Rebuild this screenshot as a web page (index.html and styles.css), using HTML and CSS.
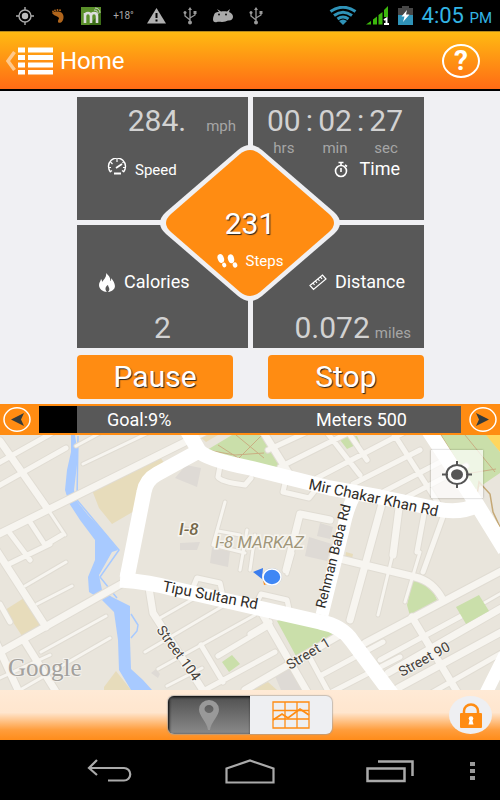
FILE: index.html
```html
<!DOCTYPE html>
<html lang="en">
<head>
    <meta charset="UTF-8">
    <meta name="viewport" content="width=device-width, initial-scale=1">
    <title>Home</title>
    <link rel="stylesheet" href="styles.css">
</head>
<body>
    <div class="status-bar">
        <div class="status-icons">
            <svg width="18" height="18" viewBox="0 0 18 18"><g fill="none" stroke="#aaa" stroke-width="1.4"><circle cx="9" cy="9" r="6"/><path d="M9 0v3M9 15v3M0 9h3M15 9h3"/></g><circle cx="9" cy="9" r="3.2" fill="#bbb"/></svg>
            <svg width="12" height="14" viewBox="0 0 12 14" fill="#b0651c"><path d="M0 4C2 2 8 2 10 4c3 3 1 9-1 9.500-3 1-4-1-2-4C7 7 3 8 0 4z"/><circle cx="1" cy="2.500" r=".9"/><circle cx="3" cy="1.500" r=".9"/><circle cx="5.500" cy="1" r=".9"/><circle cx="8" cy="1.300" r="1"/></svg>
            <svg width="20" height="18" viewBox="0 0 20 18"><rect width="20" height="18" fill="#5a8f2a"/><path d="M20 5v13H8z" fill="#3c6d17"/><path d="M4 16V6M4 9c0-4 6-4 6 0v7M10 9c0-4 6-4 6 0v7" fill="none" stroke="#ddd" stroke-width="2.600"/><path d="M13 3c3 0 4 2 4 4M14 1c3 0 5 2 5 5" fill="none" stroke="#ccc"/></svg>
            <span class="temperature">+18°</span>
            <svg width="19" height="16" viewBox="0 0 19 16"><path d="M9.500 0L19 15.500H0z" fill="#b0b0b0"/><path d="M9.500 5v5M9.500 11.500v2" stroke="#000" stroke-width="2"/></svg>
            <svg width="14" height="18" viewBox="0 0 14 18" fill="none" stroke="#999" stroke-width="1.300"><path d="M7 2v13M2 6v3l5 4M12 6v2l-5 3"/><g fill="#999" stroke="none"><path d="M7 0l2 3H5z"/><circle cx="7" cy="15.500" r="2"/><circle cx="2" cy="5.500" r="1.500"/><path d="M10.500 4h3v3h-3z"/></g></svg>
            <svg width="20" height="14" viewBox="0 0 20 14"><path d="M1 6C2 3 4 3 6 3L4 0l4 2.500c2-.5 4-.5 6 0L17 0l-1 3c3 1 4 3 4 5s-2 4-5 3.500c-2 .5-3 1.500-6 1.500-2 0-3-.5-5 0-4 1-5-2-3-7z" fill="#aaa"/><circle cx="6" cy="5.500" r="1" fill="#111"/><circle cx="13" cy="5.500" r="1" fill="#111"/></svg>
            <svg width="14" height="18" viewBox="0 0 14 18" fill="none" stroke="#999" stroke-width="1.300"><path d="M7 2v13M2 6v3l5 4M12 6v2l-5 3"/><g fill="#999" stroke="none"><path d="M7 0l2 3H5z"/><circle cx="7" cy="15.500" r="2"/><circle cx="2" cy="5.500" r="1.500"/><path d="M10.500 4h3v3h-3z"/></g></svg>
        </div>
        <div class="status-system">
            <svg width="28" height="19" viewBox="0 0 28 19" fill="none" stroke="#2f93b8" stroke-width="3"><path d="M1.500 5.500Q14-3 26.500 5.500M5 9.500Q14 3 23 9.500M8.500 13Q14 9 19.500 13"/><path d="M14 19l-4-4q4-3 8 0z" fill="#2f93b8" stroke="none"/></svg>
            <svg width="23" height="19" viewBox="0 0 23 19"><path d="M0 18.500L5 15v3.500zM7 13.500l4-3v8H7zM12.500 9l4-3v12.500h-4zM18 4l4-4v11h-4z" fill="#3cb70d"/><path d="M18 14l2.500-1.500V18M18 18h5" fill="none" stroke="#fff" stroke-width="2"/></svg>
            <svg width="15" height="19" viewBox="0 0 15 19"><path d="M4 0h7v2h4v7H0V2h4z" fill="#474747"/><path d="M0 9h15v10H0z" fill="#2f93b8"/><path d="M9 4L3.500 10.500h3L5 16l6.500-7.500H8z" fill="#fff"/></svg>
            <span class="clock-time">4:05 <small>PM</small></span>
        </div>
    </div>

    <header class="header">
        <button class="menu-button" aria-label="Menu">
            <svg width="48" height="28" viewBox="0 0 48 28"><path d="M8.500 5L2 14l6.500 9" fill="none" stroke="#ffc98c" stroke-width="3.500"/><path d="M12 .500h7v5h-7zM22 .500h25v5H22zM12 8h7v5h-7zM22 8h25v5H22zM12 15.500h7v5h-7zM22 15.500h25v5H22zM12 23h7v4.500h-7zM22 23h25v4.500H22z" fill="#fff"/></svg>
        </button>
        <h1>Home</h1>
        <button class="help-button" aria-label="Help">?</button>
    </header>

    <main>
        <section class="dashboard">
            <div class="cells">
                <div class="cell speed">
                    <div class="value">284.<span class="unit">mph</span></div>
                    <div class="label small">
                        <svg width="20" height="17" viewBox="0 0 20 17" fill="none" stroke="#fff"><path d="M3.500 14a8.500 8.500 0 1 1 13 0" stroke-width="1.400"/><path d="M1 9.500h3M16 9.500h3M3.500 4l2 2M10 1v3M16.500 4l-1 1M3 14l2-1.500M17 14l-2-1.500" stroke-width="1.200"/><path d="M9 10l6-4" stroke-width="1.800"/><path d="M7 15.500h7" stroke-width="2"/></svg>
                        Speed
                    </div>
                </div>
                <div class="cell time">
                    <div class="timer">
                        <div class="value">00</div><div class="value">:</div>
                        <div class="value">02</div><div class="value">:</div>
                        <div class="value">27</div>
                        <span>hrs</span><span></span><span>min</span><span></span><span>sec</span>
                    </div>
                    <div class="label">
                        <svg width="14" height="17" viewBox="0 0 14 17" fill="none" stroke="#fff" stroke-width="1.600"><circle cx="7" cy="10" r="5.500"/><path d="M4.500 1.500h5M7 1v4M7 7v4M11 4l2 1.500"/></svg>
                        Time
                    </div>
                </div>
                <div class="cell calories">
                    <div class="label">
                        <svg width="17" height="19" viewBox="0 0 17 19"><path d="M7 0c3 3 5 5 4 8 1 0 1.500-2 1-3 3 3 6 9 2 12-2 1.500-4 2-5 2 3-3 0-5 0-7-2 1-4 4-1 7-4 0-8-3-8-7 0-3 2-4 2-6 1 1 1 2 1 3 2-3 5-5 4-9z" fill="#fff"/></svg>
                        Calories
                    </div>
                    <div class="value">2</div>
                </div>
                <div class="cell distance">
                    <div class="label">
                        <svg width="18" height="17" viewBox="0 0 18 17" fill="none" stroke="#fff" stroke-width="1.200"><path d="M1 11.500L13.500 1 17 5 4.500 15.500zM4 9l1.500 2M6.500 7L8 9M9 5l1.500 2M11.500 3L13 5"/></svg>
                        Distance
                    </div>
                    <div class="value">0.072<span class="unit">miles</span></div>
                </div>
            </div>
            <div class="steps">
                <svg class="diamond" viewBox="0 0 182 158"><path d="M79 6Q91-4 103 6L175 68Q187 79 175 90L103 152Q91 162 79 152L7 90Q-5 79 7 68Z" fill="#f0f0f3"/><path d="M81 10Q91 2 101 10L170 70Q180 79 170 88L101 148Q91 156 81 148L12 88Q2 79 12 70Z" fill="#ff8c12"/></svg>
                <div class="value">231</div>
                <div class="label small">
                    <svg width="21" height="14" viewBox="0 0 21 14" fill="#fff"><ellipse cx="3.800" cy="4.500" rx="3.100" ry="4.500" transform="rotate(-20 3.800 4.500)"/><ellipse cx="7.200" cy="11" rx="2" ry="2.500" transform="rotate(-20 7.200 11)"/><ellipse cx="14" cy="4.800" rx="3.100" ry="4.500" transform="rotate(-15 14 4.800)"/><ellipse cx="18" cy="11" rx="2.300" ry="2.600" transform="rotate(-20 18 11)"/></svg>
                    Steps
                </div>
            </div>
            <div class="actions">
                <button>Pause</button>
                <button>Stop</button>
            </div>
        </section>

        <section class="goal-bar">
            <button class="round-button" aria-label="Previous goal">
                <svg width="28" height="25" viewBox="0 0 28 25"><ellipse cx="14" cy="12.500" rx="13" ry="11.700" fill="none" stroke="#fff" stroke-width="1.500"/><path d="M8 12.500L21 6l-3 6.500 3 6.500z" fill="#333b3c"/></svg>
            </button>
            <div class="goal-track">
                <div class="goal-fill" style="width: 9%"></div>
                <span>Goal:9%</span>
                <span>Meters 500</span>
            </div>
            <button class="round-button" aria-label="Next goal">
                <svg width="28" height="25" viewBox="0 0 28 25"><ellipse cx="14" cy="12.500" rx="13" ry="11.700" fill="none" stroke="#fff" stroke-width="1.500"/><path d="M20 12.500L7 6l3 6.500L7 19z" fill="#333b3c"/></svg>
            </button>
        </section>

        <section class="map">
            <svg class="map-drawing" viewBox="0 435 500 255" preserveAspectRatio="xMidYMid slice">
                <rect y="435" width="500" height="255" fill="#e9e5dc"/>

                <!-- land use -->
                <g fill="#e7dcbb">
                    <path d="M92 490L157 453 165 464 148 480 136 510 112 524 99 508zM5 610L24 598 41 625 22 636zM104 687L116 671 131 690H104zM198 435h20l-12 7zM250 690l18-8 9 8zM346 552l7 2-1 5-7-1z"/>
                </g>
                <g fill="#cadfaa">
                    <path d="M207 450L232 435H264L281 468 220 458zM436 435H487L500 452V473L475 490zM337 436H357L360 443 347 449zM413 579L430 583 437 600 410 616 407 605zM277 621L284 618 340 633 296 656zM222 662L232 655 240 664 229 672z"/>
                </g>
                <path d="M486 435h14v17z" fill="#ffd65e"/>
                <g fill="#dedad5">
                    <path d="M175 478L186 465 201 468 197 487zM320 523l13 4-3 12-13-3zM309 537l23 7-5 17-22-5zM180 543l20-1-3 8h-17zM212 548l18 3-2 16-18-4zM180 525l9 2-1 6-9-1zM275 676l21-11 13 25h-28zM151 673l5-4 4 5-2 4z"/>
                </g>
                <path d="M207 450l28 5 29-2M218 445l28 18M236 435l28 23M262 435l-26 26M441 435l24 39 31-5M465 435l30 37" fill="none" stroke="#c9ae83"/>
                <path d="M476 502l3-20 11 12 3 18 7 15" fill="none" stroke="#c5a875" stroke-width="1.500"/>

                <!-- canal -->
                <path d="M71 435L71 452 67 470 65 490 69 503 80 520 95 540 95 560 88 577 89 592 102 600 114 612 118 640 119 670 131 690H152L143 680 131 669 130 640V606L112 597 102 590 99 575 112 552 118 550 105 533 88 515 76 500 74 490 77 465 78 455 75 435z" fill="#a8caff"/>
                <path d="M78 436L77 500 119 550 100 577 117 598M131 614l7 11-1 6-6 7" fill="none" stroke="#a8caff" stroke-width="1.500"/>

                <!-- side streets: casing first, then fill -->
                <g fill="none" stroke="#e0dcd3" stroke-linecap="round" stroke-linejoin="round">
                    <path stroke-width="9" d="M-5 536L183 443 232 418M-5 655L123 583M0 441L47 508M-5 548L46 627M25 642L58 695M262 430L290 475M149 588L153 613 206 695M260 610L309 695M365 643L505 569M340 559L415 577Q433 581 443 600M383 500L350 620M399 508L393 555M412 617L459 695M245 690L345 632M300 514L330 520M300 514L286 570M-5 640L18 690M398 688L505 630M388 673L505 606"/>
                    <path stroke-width="7" d="M-5 465L52 433M-5 488L66 448M9 532L30 560M30 522L45 545 62 535M7 565L50 544M0 604L10 622M268 450L305 433M280 467L350 432M317 478L405 432M353 484L420 450M383 492L450 457M407 497L466 466M325 430L360 475M350 435L367 460M388 425L438 503M424 514L417 552M444 514L423 572M310 658L330 695M320 676L383 642M332 692L400 657M380 660L465 614M201 645L223 682M205 690L275 652M218 656L270 625M250 634L270 622M220 466L218 477Q221 482 245 485L251 478M285 483L283 492 309 498 317 488M194 585L197 578 220 583 222 592M257 602L261 594 287 600 289 609M428 695L505 651"/>
                    <path stroke-width="5" d="M47 508L65 535M76 446L100 433M83 464L148 433M25 586L66 562M37 604L72 586M41 652L106 616M0 678L50 655M110 638L20 690M160 618L200 595M145 652L228 603M158 669L255 615M167 686L202 668M225 502L213 545 245 553M218 531L240 535M293 553L287 574M393 553L378 615M420 552L405 602M465 614L505 591M247 530L240 570M255 535L250 570"/>
                </g>
                <g fill="none" stroke="#f7f5f0" stroke-linecap="round" stroke-linejoin="round">
                    <path stroke-width="7" d="M-5 536L183 443 232 418M-5 655L123 583M0 441L47 508M-5 548L46 627M25 642L58 695M262 430L290 475M149 588L153 613 206 695M260 610L309 695M365 643L505 569M340 559L415 577Q433 581 443 600M383 500L350 620M399 508L393 555M412 617L459 695M245 690L345 632M300 514L330 520M300 514L286 570M-5 640L18 690M398 688L505 630M388 673L505 606"/>
                    <path stroke-width="5" d="M-5 465L52 433M-5 488L66 448M9 532L30 560M30 522L45 545 62 535M7 565L50 544M0 604L10 622M268 450L305 433M280 467L350 432M317 478L405 432M353 484L420 450M383 492L450 457M407 497L466 466M325 430L360 475M350 435L367 460M388 425L438 503M424 514L417 552M444 514L423 572M310 658L330 695M320 676L383 642M332 692L400 657M380 660L465 614M201 645L223 682M205 690L275 652M218 656L270 625M250 634L270 622M220 466L218 477Q221 482 245 485L251 478M285 483L283 492 309 498 317 488M194 585L197 578 220 583 222 592M257 602L261 594 287 600 289 609M428 695L505 651"/>
                    <path stroke-width="3" d="M47 508L65 535M76 446L100 433M83 464L148 433M25 586L66 562M37 604L72 586M41 652L106 616M0 678L50 655M110 638L20 690M160 618L200 595M145 652L228 603M158 669L255 615M167 686L202 668M225 502L213 545 245 553M218 531L240 535M293 553L287 574M393 553L378 615M420 552L405 602M465 614L505 591M247 530L240 570M255 535L250 570"/>
                </g>
                <path d="M456 607L479 595 489 611 466 624z" fill="#cadfaa"/>

                <!-- main roads -->
                <g fill="none" stroke="#fff" stroke-linejoin="round">
                    <path stroke-width="15" d="M184 425L199 451Q206 459 250 468L330 488 380 497 437 509Q460 514 477 505M199 451L157 474Q146 480 144 492L127 578M425 425L476 503 505 550"/>
                    <path stroke-width="15" d="M120 580Q150 582 175 589L320 622Q342 626 352 641L393 696"/>
                    <path stroke-width="13" d="M353 498Q347 510 343 530L322 615M505 655L485 695"/>
                </g>

                <g class="road-names">
                    <text transform="translate(308 489) rotate(12)">Mir Chakar Khan Rd</text>
                    <text transform="translate(162 591) rotate(11)">Tipu Sultan Rd</text>
                    <text class="narrow" transform="translate(325 609) rotate(-76)">Rehman Baba Rd</text>
                    <text class="minor" transform="translate(156 630) rotate(54)">Street 104</text>
                    <text class="minor" transform="translate(290 670) rotate(-31)">Street 1</text>
                    <text class="minor" transform="translate(402 677) rotate(-29)">Street 90</text>
                </g>
                <text class="area-name" x="179" y="535">I-8</text>
                <text class="area-name light" x="215" y="548">I-8 MARKAZ</text>
                <text class="watermark" x="8" y="676">Google</text>

                <!-- current position -->
                <path d="M253 572l10-4-1 11z" fill="#3b7ded"/>
                <path d="M263 580l4 4-3 1z" fill="#ff8c12"/>
                <ellipse cx="272" cy="577" rx="10" ry="9" fill="#b9c3d3"/>
                <ellipse cx="272" cy="577" rx="9" ry="8" fill="#3f87f5" stroke="#fff" stroke-width="1.500"/>
            </svg>
            <button class="locate-button" aria-label="My location">
                <svg width="30" height="27" viewBox="0 0 30 27"><g fill="none" stroke="#555" stroke-width="2"><ellipse cx="15" cy="13.500" rx="10.500" ry="9.500"/><path d="M15 0v5M15 22v5M0 13.500h6M24 13.500h6"/></g><ellipse cx="15" cy="13.500" rx="6" ry="5.300" fill="#555"/></svg>
            </button>
        </section>

        <div class="toolbar">
            <div class="view-switch">
                <button class="active" aria-label="Map">
                    <svg width="20" height="30" viewBox="0 0 20 30"><path d="M10 0a10 9.500 0 0 1 10 9.500C20 16 12 22 11 30H9C8 22 0 16 0 9.500A10 9.500 0 0 1 10 0zm0 5a4.500 4 0 1 0 0 8 4.500 4 0 0 0 0-8z" fill="#999" fill-rule="evenodd"/></svg>
                </button>
                <button aria-label="Chart">
                    <svg width="38" height="28" viewBox="0 0 38 28" fill="none" stroke="#ff8c12"><path d="M1 1h36v26H1zM1 9.500h36M1 18h36M13 1v26M25 1v26" stroke-width="1.300"/><path d="M1 19l9-6 6 4 12-9 9 6" stroke-width="1.800"/></svg>
                </button>
            </div>
            <button class="lock-button" aria-label="Lock">
                <svg width="22" height="25" viewBox="0 0 22 25"><path d="M4 12V8a7 6.500 0 0 1 14 0v4" fill="none" stroke="#ff8c12" stroke-width="2.500"/><rect y="10" width="22" height="15" rx="1" fill="#ff8c12"/><circle cx="11" cy="15.500" r="2.300" fill="#fff"/><path d="M10 16h2l1.500 5.500h-5z" fill="#fff"/></svg>
            </button>
        </div>
    </main>

    <nav class="system-nav">
        <button aria-label="Back">
            <svg width="46" height="24" viewBox="0 0 46 24" fill="none" stroke="#aaa" stroke-width="2.200"><path d="M10 1L2 9l8 7M2 9h35a6 6 0 0 1 0 12.500H21"/></svg>
        </button>
        <button aria-label="Home">
            <svg width="50" height="25" viewBox="0 0 50 25" fill="none" stroke="#aaa" stroke-width="2.200"><path d="M1.500 23.500V9.500L25 1.500l23.500 8v14z"/></svg>
        </button>
        <button aria-label="Recent apps">
            <svg width="48" height="23" viewBox="0 0 48 23" fill="none" stroke="#aaa" stroke-width="2.500"><path d="M1.500 8.500h37v12.500h-37zM12 1.500h34.500V16"/></svg>
        </button>
        <button class="more" aria-label="More">
            <svg width="5" height="18" viewBox="0 0 5 18"><path d="M0 0h5v4H0zM0 7h5v4H0zM0 14h5v4H0z" fill="#999"/></svg>
        </button>
    </nav>
</body>
</html>
```
FILE: styles.css
```css
* {
    margin: 0;
    padding: 0;
    box-sizing: border-box;
    font-family: Roboto, 'Open Sans', sans-serif;
}

body {
    min-height: 100vh;
    display: flex;
    flex-direction: column;
    background: #000;
    color: #fff;
}

button {
    border: none;
    background: none;
    color: inherit;
    cursor: pointer;
}

svg {
    display: block;
    flex: none;
}

/* Status bar */
.status-bar {
    display: flex;
    justify-content: space-between;
    align-items: center;
    height: 31px;
    padding: 0 8px;
}

.status-icons {
    display: grid;
    grid-template-columns: repeat(8, 33px);
    align-items: center;
    justify-items: center;
}

.temperature {
    color: #aaa;
    font-size: 10px;
}

.status-system {
    display: flex;
    align-items: center;
    gap: 9px;
}

.clock-time {
    padding-top: 3px;
    color: #33b5e5;
    font-size: 22px;
    line-height: 28px;
}

.clock-time small {
    font-size: 15px;
}

/* Header */
.header {
    display: flex;
    align-items: center;
    height: 60px;
    padding: 1px 20px 0 6px;
    background: linear-gradient(#ffba12, #ff6b15);
    border-top: 1px solid #b58a20;
    border-bottom: 2px solid #000;
}

.header h1 {
    flex: 1;
    margin-left: 6px;
    font-size: 24px;
    font-weight: 400;
}

.help-button {
    width: 38px;
    height: 34px;
    border: 2px solid #fff;
    border-radius: 50%;
    font-size: 28px;
    font-weight: 700;
    line-height: 30px;
}

main {
    flex: 1;
    display: flex;
    flex-direction: column;
}

/* Dashboard */
.dashboard {
    position: relative;
    padding: 6px 76px 5px 77px;
    background: #f0f0f3;
}

.cells {
    display: grid;
    grid-template-columns: 1fr 1fr;
    grid-auto-rows: 123px;
    gap: 5px;
}

.cell {
    display: flex;
    flex-direction: column;
    background: #585858;
}

.value {
    color: #d2d2d2;
    font-size: 30px;
    line-height: 36px;
}

.unit {
    color: #a6a6a6;
    font-size: 15px;
}

.label {
    display: flex;
    align-items: center;
    gap: 8px;
    font-size: 18px;
    line-height: 20px;
}

.label.small {
    font-size: 15px;
}

.speed {
    padding: 6px 12px 0 30px;
    gap: 14px;
}

.speed .value {
    text-align: right;
}

.speed .unit {
    margin-left: 20px;
}

.speed svg {
    margin-bottom: 6px;
}

.time {
    padding: 6px 21px 0 14px;
    gap: 2px;
}

.timer {
    display: grid;
    grid-template-columns: auto 1fr auto 1fr auto;
    justify-items: center;
    color: #a6a6a6;
    font-size: 15px;
    line-height: 18px;
}

.time .label {
    justify-content: flex-end;
    gap: 12px;
    padding-right: 3px;
}

.calories,
.distance {
    padding-top: 47px;
    gap: 18px;
}

.calories .label {
    padding-left: 22px;
}

.calories .value {
    text-align: center;
}

.distance .label {
    justify-content: flex-end;
    padding-right: 19px;
}

.distance .value {
    padding-right: 13px;
    text-align: right;
}

.distance .unit {
    margin-left: 5px;
}

/* Steps diamond over the four cells */
.steps {
    position: absolute;
    top: 53px;
    left: 50%;
    width: 182px;
    height: 158px;
    padding-top: 62px;
    transform: translateX(-50%);
    display: flex;
    flex-direction: column;
    align-items: center;
    gap: 9px;
}

.diamond {
    position: absolute;
    inset: 0;
    overflow: visible;
}

.steps .value {
    position: relative;
    color: #fff;
    text-shadow: 1px 1px 1px #222;
}

.steps .label {
    position: relative;
}

.actions {
    display: flex;
    justify-content: space-between;
    margin-top: 7px;
}

.actions button {
    width: 45%;
    height: 44px;
    border-radius: 4px;
    background: #ff8c12;
    font-size: 30px;
    line-height: 44px;
    text-shadow: 1px 1px 1px #222;
}

/* Goal */
.goal-bar {
    display: flex;
    align-items: center;
    height: 31px;
    padding: 0 3px;
    gap: 8px;
    background: #ff8c12;
}

.goal-track {
    position: relative;
    flex: 1;
    height: 27px;
    display: flex;
    justify-content: space-between;
    padding: 0 54px 0 68px;
    background: #585858;
    font-size: 18px;
    line-height: 27px;
}

.goal-fill {
    position: absolute;
    top: 0;
    bottom: 0;
    left: 0;
    background: #000;
}

/* Map */
.map {
    position: relative;
    flex: 1;
    min-height: 255px;
}

.map-drawing {
    position: absolute;
    width: 100%;
    height: 100%;
}

.road-names text {
    fill: #2e2b27;
    font-size: 15px;
}

.road-names .narrow {
    font-size: 14px;
}

.road-names .minor {
    fill: #45413b;
    stroke: #f7f5f0;
    stroke-width: 2px;
    paint-order: stroke;
    font-size: 14px;
}

.area-name {
    fill: #75684a;
    stroke: #f7f5f0;
    stroke-width: 3px;
    paint-order: stroke;
    font-size: 17px;
    font-style: italic;
    font-weight: 500;
}

.area-name.light {
    fill: #a0967a;
    font-weight: 400;
}

.watermark {
    fill: #a3a19d;
    stroke: #f2f0ec;
    stroke-width: 2px;
    paint-order: stroke;
    font-family: 'Liberation Serif', serif;
    font-size: 25px;
}

.locate-button {
    position: absolute;
    top: 15px;
    right: 17px;
    width: 52px;
    height: 48px;
    display: grid;
    place-items: center;
    background: rgba(255, 255, 255, 0.7);
    box-shadow: 0 0 2px rgba(0, 0, 0, 0.3);
}

/* Bottom toolbar */
.toolbar {
    display: grid;
    grid-template-columns: 1fr auto 1fr;
    align-items: center;
    height: 50px;
    padding: 0 8px;
    background: linear-gradient(#ffead6, #ffe6ce 45%, #ff9d3c 80%, #ff8c1a);
}

.view-switch {
    grid-column: 2;
    display: flex;
    border-radius: 6px;
    overflow: hidden;
    background: #eeeff2;
    box-shadow: 0 0 1px 1px rgba(160, 160, 160, 0.6);
}

.view-switch button {
    width: 82px;
    height: 38px;
    display: grid;
    place-items: center;
}

.view-switch .active {
    background: linear-gradient(#505050, #8a8a8a);
    box-shadow: inset 1px 1px 3px #000;
}

.lock-button {
    justify-self: end;
    width: 43px;
    height: 38px;
    display: grid;
    place-items: center;
    border-radius: 50%;
    background: #eeeff2;
}

/* System navigation */
.system-nav {
    display: grid;
    grid-template-columns: 1fr repeat(3, 28%) 1fr;
    align-items: center;
    justify-items: center;
    height: 60px;
    padding-top: 2px;
}

.system-nav button:first-child {
    grid-column: 2;
}

.system-nav .more {
    justify-self: start;
    padding-left: 10px;
}
```
